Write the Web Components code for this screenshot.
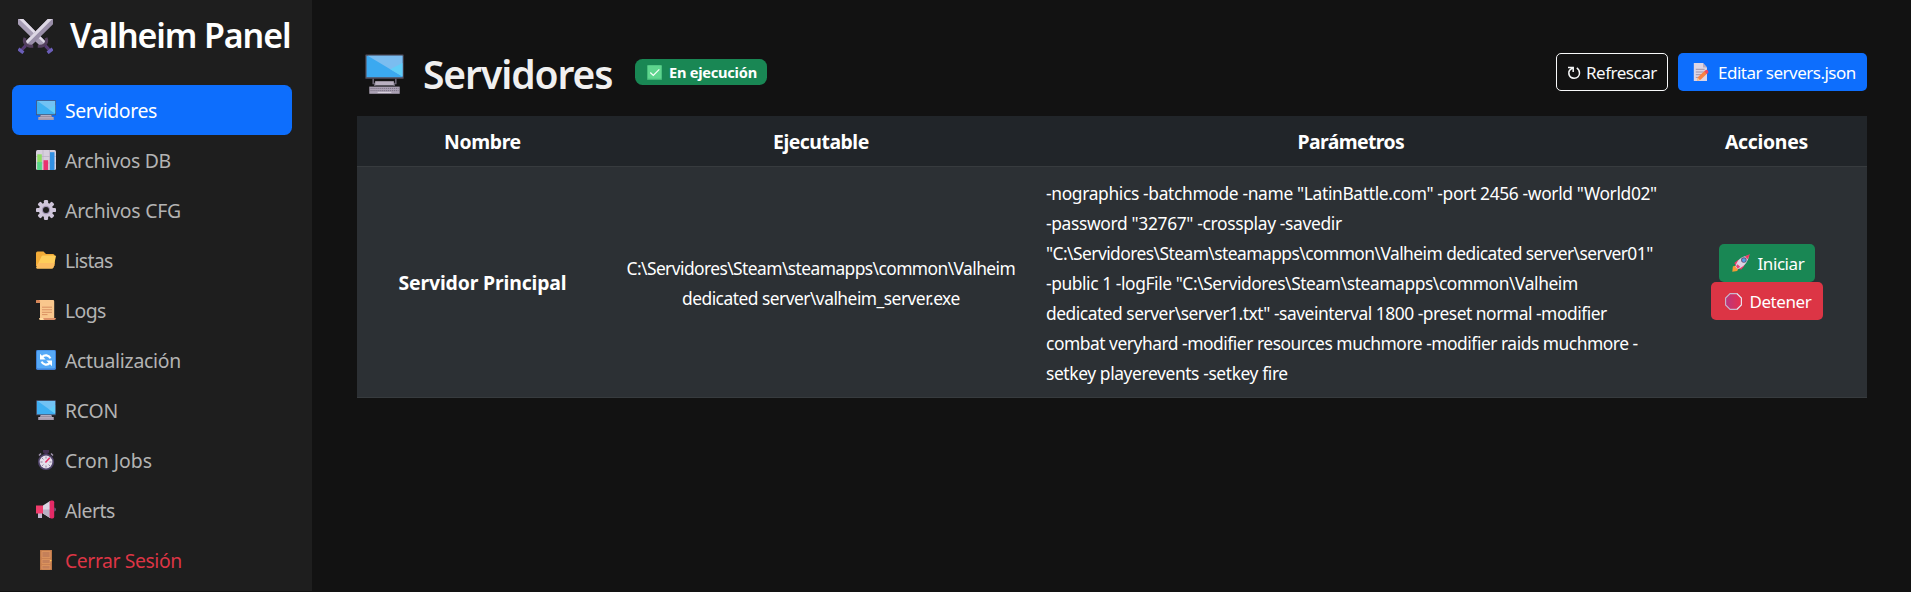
<!DOCTYPE html>
<html lang="es">
<head>
<meta charset="utf-8">
<title>Valheim Panel</title>
<style>
html,body{margin:0;height:100%;background:#121212;overflow:hidden}
body{font-family:"Noto Sans","Open Sans",sans-serif;color:#fff}
</style>
</head>
<body>
<app-shell></app-shell>
<script>
const define = (name, html, setup) => {
  const t = document.createElement('template');
  t.innerHTML = html;
  customElements.define(name, class extends HTMLElement {
    connectedCallback() {
      if (this.shadowRoot) return;
      this.attachShadow({mode: 'open'}).append(t.content.cloneNode(true));
      if (setup) setup(this, this.shadowRoot);
    }
  });
};

/* Pictograms, each on a 20 x 20 grid */
const icons = {
  computer: `<rect x=".2" y=".2" width="19.6" height="15" rx=".5" fill="#50506a"/><rect x=".9" y=".9" width="18.2" height="13.4" fill="#3eaff2"/><path d="M1.5.9H19.1V13.5Z" fill="#72c2f4"/><path d="M19.1 5v8.5L13 9.2Z" fill="#62cdf8"/><path d="M4 15.2h12v2H4z" fill="#8b8396"/><path d="M5 15.2h10v1H5z" fill="#c4bccd"/><path d="M2.2 17h15.6v3H2.2z" fill="#a49aac"/><path d="M3 17.8h14" stroke="#cbc3d2" stroke-width=".6"/>`,
  computerBig: `<rect x=".2" y=".2" width="19.6" height="12.2" rx=".3" fill="#55505f"/><rect x=".8" y=".9" width="18.4" height="10.7" fill="#3ba9f0"/><path d="M1.4.9H19.2V11.2Z" fill="#7bbdf0"/><path d="M19.2 4.5v6.7L13 7.6Z" fill="#60cef8"/><path d="M3.8 12.4h.8v2h.8v1.3h9.200v-1.300h.8v-2h.8v2.700h-.8v.9H4.600v-.9h-.8z" fill="#6b6573"/><path d="M5.200 13.600h9.600v2H5.200z" fill="#b9b0c0"/><path d="M2.200 16.300h15.600v3.600H2.200z" fill="#aba1b4"/><path d="M2.800 17.200h14.400M2.800 18.300h14.400" stroke="#776f80" stroke-width=".5" stroke-dasharray=".6 .4"/><path d="M6.500 19.200h7" stroke="#ded7e3" stroke-width=".5"/>`,
  swords: `<path d="M0 0h3L16 13.2 13.2 16 0 3z" fill="#a79db5"/><path d="M.6 0H3L16 13.2l-1 .8z" fill="#e2dce9"/><path d="M20 0h-3L4 13.2 6.8 16 20 3z" fill="#998ea8"/><path d="M19.6 0H17L4 13.2l1.3 1.1z" fill="#ddd7e4"/><path d="M4 10.8c-1.2 3 .8 5 4.7 4.8" fill="none" stroke="#54405f" stroke-width="1.7"/><path d="M16 10.8c1.2 3-.8 5-4.7 4.8" fill="none" stroke="#54405f" stroke-width="1.7"/><path d="M4.4 15.2 1.8 18M15.6 15.2l2.6 2.8" stroke="#553a73" stroke-width="1.8"/><path d="m.2 17.1 2.9 2.2M19.8 17.1l-2.9 2.2" stroke="#6b5eb8" stroke-width="1.9"/>`,
  chart: `<rect width="20" height="20" rx="1.5" fill="#d7cfdd"/><path d="M0 6.5h20M0 13h20M7 0v20M13.5 0v20" stroke="#b9afc4" stroke-width=".7"/><path d="M1.3 4.3h4.5V20H1.3z" fill="#8ddd63"/><path d="M1.3 12h4.5v8H1.3z" fill="#55d58b"/><path d="M7.5 10.2h4.6V20H7.5z" fill="#e8316f"/><path d="M14 2.2h4.5V20H14z" fill="#3290e3"/>`,
  gear: `<g fill="#cfc5da"><circle cx="10" cy="10" r="7.2"/><g><rect x="7.9" y="0" width="4.2" height="5" rx="1.2"/><rect x="7.9" y="15" width="4.2" height="5" rx="1.2"/><rect y="7.9" x="0" height="4.2" width="5" rx="1.2"/><rect y="7.9" x="15" height="4.2" width="5" rx="1.2"/></g><g transform="rotate(45 10 10)"><rect x="7.9" y="0" width="4.2" height="5" rx="1.2"/><rect x="7.9" y="15" width="4.2" height="5" rx="1.2"/><rect y="7.9" x="0" height="4.2" width="5" rx="1.2"/><rect y="7.9" x="15" height="4.2" width="5" rx="1.2"/></g></g><circle cx="10" cy="10" r="4.2" fill="#a396b5"/><circle cx="10" cy="10" r="3" fill="#1e1e1e"/>`,
  folder: `<path d="M0 3.2q0-1.6 1.5-1.6H7.5L10 4h7q1.6 0 1.6 1.6V16H0z" fill="#f3ac38"/><path d="M5.6 6.3Q6 5.5 7 5.5h12q1.2 0 .9 1.1L17.6 17q-.4 1.5-2 1.5H1.3Q0 18.5.5 17z" fill="#ffce5a"/><path d="m2 13-1.5 4q-.5 1.5.8 1.5h14.3q1.6 0 2-1.5l.9-4z" fill="#fdbd60"/>`,
  scroll: `<path d="M1.5 0H17q1.2 0 1.2 1.2V18H4V2.8H0V1.4Q0 0 1.5 0z" fill="#f9c78d"/><path d="M0 2.8V1.4Q0 0 1.5 0H3q1.2 0 1.2 2.8z" fill="#d98356"/><path d="M6 7.2h10M6 9.8h10M6 12.3h10M6 14.6h5.5" stroke="#d58a5d" stroke-width=".9"/><path d="M6 18h14q-.2 2-1.8 2H5q-1.8 0-1.8-1.5z" fill="#dd9168"/><path d="M3.2 18h4q0 1.4 1.2 2H5q-1.8 0-1.8-1.5z" fill="#ffdba0"/>`,
  sync: `<rect width="20" height="20" rx="1.4" fill="#3d7fd6"/><rect x="1" y=".6" width="18" height="18" rx="1" fill="#56a9f7"/><path d="M6 7.2c2.5-2.9 7-2.2 8.4 1.2M14 12.8c-2.5 2.9-7 2.2-8.4-1.2" fill="none" stroke="#fff" stroke-width="2.2"/><path d="M4 3.8v5.7h5.7zM16 16.2v-5.7h-5.7z" fill="#fff"/>`,
  stopwatch: `<path d="M7 0h6v2.8h-1.3v2H8.3v-2H7z" fill="#433052"/><path d="m3 5.5 2-2M17 5.5l-2-2" stroke="#a294b0" stroke-width="1.5"/><circle cx="10" cy="12" r="8" fill="#50446b"/><circle cx="10" cy="12" r="6.4" fill="#e5dfec"/><path d="M10 6.5v2M10 15.5v2M4.5 12h2M13.5 12h2M6.1 8.1l1.3 1.3M12.6 14.6l1.3 1.3M6.1 15.9l1.3-1.3" stroke="#8c7d9b" stroke-width="1"/><path d="m9.4 12.5 4.4-4.7" stroke="#e52e65" stroke-width="1.6"/>`,
  megaphone: `<path d="M2 12h4v6H2z" fill="#c1b5ce"/><path d="M0 5.5h7v8H0z" fill="#f13c6c"/><path d="M7 5.5 14 1v17l-7-4.4z" fill="#dcd5e4"/><path d="M7 9.5h7V18l-7-4.4z" fill="#b8b0c3"/><rect x="13.6" y=".6" width="4.6" height="17.8" rx="1.6" fill="#e42a66"/><path d="M18.2 7.5q1.8 0 1.8 2t-1.8 2z" fill="#6a5475"/>`,
  door: `<path d="M4 0h12v20H4z" fill="#b77646"/><path d="M4.7.5h10.6v19H4.7z" fill="#ca8152"/><path d="M6 1.5h8v6H6zM6 9.5h8v4H6zM6 15.5h8v3.5H6z" fill="#c58059" stroke="#e29a61" stroke-width=".7"/><circle cx="14.7" cy="10.6" r=".8" fill="#ffc858"/>`,
  check: `<rect width="20" height="20" rx="1" fill="#43b978"/><rect x="1.2" y=".8" width="17.8" height="17.5" rx="1" fill="#5ed58e"/><path d="m4.4 10 4 4 8-8.2" fill="none" stroke="#f7fff8" stroke-width="1.6"/>`,
  memo: `<path d="M1 0h11.5L17.5 5v15H1z" fill="#ded5e4"/><path d="M12.5 0v5h5z" fill="#b8acc2"/><path d="M3.5 7h11M3.5 10h10M3.5 13h7M3.5 16h5" stroke="#93879f" stroke-width="1"/><path d="m6.3 15.5 8.4-6.8 3 3-8.3 6.8-4.3 1.2z" fill="#f98242"/><path d="m14.2 9.2 1.8-1.4q1.4-.7 2.6.6t.4 2.6l-1.7 1.3z" fill="#ed4863"/><path d="m5 19.6 1-3.1 2.5 2.4z" fill="#ffc792"/>`,
  rocket: `<path d="M1 14q2.5-1.8 4.8 0 1.8 2.5 0 5L.3 19.7z" fill="#f59a35"/><path d="M2.5 10 7 6.5l2.5 1L4.6 13zM10 17.5l3.7-4.3-.6-3.3-5.7 5.4z" fill="#ec3a6c"/><path d="M3.7 14.2C5.5 7 10 2.5 18 1.6q1 0 .7 1C17.5 10 12.5 15 6.2 17z" fill="#ded3e3"/><path d="M14.3 2.7 20 0l-2.4 5.8z" fill="#ee3863"/><path d="m4.5 13.500 1.600-2.200 3 3-2.800 2.200z" fill="#e84475"/><circle cx="13.200" cy="6.700" r="3.100" fill="#66527a"/><circle cx="13.200" cy="6.700" r="2.100" fill="#4ea0e6"/>`,
  stop: `<defs><linearGradient id="o"><stop stop-color="#b9377f"/><stop offset="1" stop-color="#e72f4c"/></linearGradient></defs><path d="M6 .7h8L19.3 6v8L14 19.3H6L.7 14V6z" fill="url(#o)" stroke="#c9b8cc" stroke-width="1.3"/><path d="M14 .7 19.3 6v8L14 19.3" fill="none" stroke="#f1e1ea" stroke-width="1.2"/>`
};
define('ui-icon', `<style>:host{display:block;flex:none}svg{display:block;width:100%;height:100%}</style><svg viewBox="0 0 20 20" preserveAspectRatio="none" aria-hidden="true"></svg>`, (el, root) => {
  el.style.width = el.getAttribute('w') + 'px';
  el.style.height = (el.getAttribute('h') || el.getAttribute('w')) + 'px';
  root.querySelector('svg').innerHTML = icons[el.getAttribute('name')];
});

/* One line of text, tracked to an exact measure */
define('fit-text', `<style>:host{display:block;white-space:nowrap;flex:none}span{display:inline-block}</style><span><slot></slot></span>`, (el, root) => {
  const w = +el.getAttribute('w'), span = root.querySelector('span');
  el.style.width = w + 'px';
  const natural = span.getBoundingClientRect().width;
  span.style.letterSpacing = ((w - natural) / (el.textContent.length - .5)).toFixed(4) + 'px';
});

define('nav-item', `<style>
:host{display:flex;align-items:center;height:50px;box-sizing:border-box;padding-left:24px;border-radius:7.5px;color:#b3b3b3;font-size:19.4px}
:host([active]){background:#0d6efd;color:#fff}
:host([danger]){color:#dc3545}
.t{padding-top:1px;margin-left:9px}
</style><slot name="icon"></slot><div class="t"><slot></slot></div>`);

define('side-bar', `<style>
:host{display:block;width:312px;height:591px;background:#1e1e1e;box-sizing:border-box;padding:0 20px 0 12px}
header{display:flex;align-items:center;height:72px;padding-left:6px;margin-bottom:13px}
header fit-text{font-size:34px;font-weight:600;line-height:48px;margin:0 0 3px 17px}
</style>
<header><ui-icon name="swords" w="35"></ui-icon><fit-text w="221">Valheim Panel</fit-text></header>
<nav></nav>`, (el, root) => {
  const items = [['computer','Servidores',92,'active'],['chart','Archivos DB',106],['gear','Archivos CFG',116],['folder','Listas',48],['scroll','Logs',41],['sync','Actualización',116],['computer','RCON',53],['stopwatch','Cron Jobs',87],['megaphone','Alerts',50],['door','Cerrar Sesión',117,'danger']];
  const nav = root.querySelector('nav');
  for (const [icon, label, w, flag] of items) {
    const n = document.createElement('nav-item');
    if (flag) n.setAttribute(flag, '');
    n.innerHTML = `<ui-icon slot="icon" name="${icon}" w="20"></ui-icon><fit-text w="${w}">${label}</fit-text>`;
    nav.append(n);
  }
});

define('ui-button', `<style>
:host{display:flex;align-items:center;box-sizing:border-box;height:38px;border-radius:5px;font-size:17px;line-height:26px;color:#fff}
:host([kind=primary]){background:#0d6efd;width:189px;padding-left:15px;gap:9px}
:host([kind=outline]){border:1px solid #f8f9fa;color:#f8f9fa;width:112px;padding-left:10px;gap:5px}
:host([kind=success]){background:#198754;width:96px;padding-left:13px;gap:8px}
:host([kind=danger]){background:#dc3545;width:112px;padding-left:14px;gap:8px}
::slotted(fit-text){padding-top:1px}
</style><slot></slot>`);

define('status-badge', `<style>
:host{display:flex;align-items:center;width:132px;height:26px;box-sizing:border-box;padding-left:12px;border-radius:7.5px;background:#198754;font-size:14.6px;font-weight:700;line-height:20px}
fit-text{margin-left:7px}
</style><ui-icon name="check" w="15"></ui-icon><fit-text w="88">En ejecución</fit-text>`);

define('page-header', `<style>
:host{display:flex;align-items:center;height:60px;margin-bottom:14px;padding-left:8px}
:host>ui-icon{margin-top:3px}
h1{margin:3px 22px 0 19px;font-size:39px;font-weight:600;line-height:54px;color:#f0f0f0}
.actions{display:flex;gap:10px;margin-left:auto}
.pic{margin-top:3px}
</style>
<ui-icon class="pic" name="computerBig" w="39" h="40"></ui-icon>
<h1><fit-text w="190">Servidores</fit-text></h1>
<status-badge></status-badge>
<div class="actions">
<ui-button kind="outline"><svg width="14" height="14" viewBox="0 0 14 14" fill="none" stroke="#f8f9fa" stroke-width="1.5"><path d="M1 2.600h5.200V7"/><path d="M5.800 3C2.500 4.300 1.500 6.500 1.900 9c.5 2.700 2.600 4.200 5.200 4.200 3.300 0 5.400-2.300 5.400-5.200 0-2.300-1-4-2.700-5.200"/></svg><fit-text w="71">Refrescar</fit-text></ui-button>
<ui-button kind="primary"><ui-icon name="memo" w="16" h="18"></ui-icon><fit-text w="138">Editar servers.json</fit-text></ui-button>
</div>`);

define('server-table', `<style>
:host{display:grid;grid-template-columns:251px 426px 634px 199px;grid-template-rows:51px 231px;width:1510px}
.h,.c{box-sizing:border-box;display:flex;flex-direction:column;align-items:center;justify-content:center;border-bottom:1px solid #373b3e}
.h{background:#212529;font-size:19.4px;font-weight:700;padding-top:1px}
.c{background:#2c3034;font-size:17.4px;line-height:30px;padding-top:2px}
.name{font-size:19.4px;font-weight:700}
.params{align-items:flex-start;padding-left:12px}
.actions{padding:0 2px 0 0}
</style>
<div class="h"><fit-text w="77">Nombre</fit-text></div>
<div class="h"><fit-text w="96">Ejecutable</fit-text></div>
<div class="h"><fit-text w="107">Parámetros</fit-text></div>
<div class="h actions"><fit-text w="83">Acciones</fit-text></div>
<div class="c name"><fit-text w="168">Servidor Principal</fit-text></div>
<div class="c"><fit-text w="389">C:\\Servidores\\Steam\\steamapps\\common\\Valheim</fit-text><fit-text w="278">dedicated server\\valheim_server.exe</fit-text></div>
<div class="c params">
<fit-text w="611">-nographics -batchmode -name "LatinBattle.com" -port 2456 -world "World02"</fit-text>
<fit-text w="296">-password "32767" -crossplay -savedir</fit-text>
<fit-text w="607">"C:\\Servidores\\Steam\\steamapps\\common\\Valheim dedicated server\\server01"</fit-text>
<fit-text w="532">-public 1 -logFile "C:\\Servidores\\Steam\\steamapps\\common\\Valheim</fit-text>
<fit-text w="561">dedicated server\\server1.txt" -saveinterval 1800 -preset normal -modifier</fit-text>
<fit-text w="592">combat veryhard -modifier resources muchmore -modifier raids muchmore -</fit-text>
<fit-text w="242">setkey playerevents -setkey fire</fit-text>
</div>
<div class="c actions">
<ui-button kind="success"><ui-icon name="rocket" w="18"></ui-icon><fit-text w="47">Iniciar</fit-text></ui-button>
<ui-button kind="danger"><ui-icon name="stop" w="17"></ui-icon><fit-text w="62">Detener</fit-text></ui-button>
</div>`);

define('app-shell', `<style>
:host{display:flex;align-items:flex-start}
main{padding:42px 0 0 45px;width:1510px}
</style><side-bar></side-bar><main><page-header></page-header><server-table></server-table></main>`);
</script>
</body>
</html>
